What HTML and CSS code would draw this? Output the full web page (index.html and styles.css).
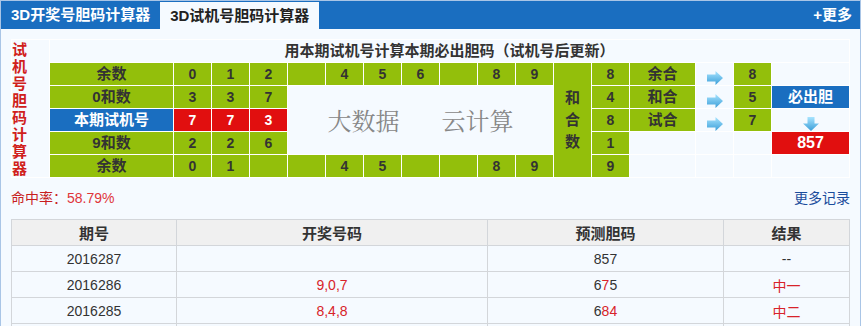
FILE: index.html
```html
<!DOCTYPE html>
<html lang="zh-CN">
<head>
<meta charset="utf-8">
<title>3D试机号胆码计算器</title>
<link rel="stylesheet" href="styles.css">
</head>
<body>
<div class="panel">
  <div class="tabbar">
    <div class="tabs">
      <span class="tab">3D开奖号胆码计算器</span>
      <span class="tab active">3D试机号胆码计算器</span>
    </div>
    <a class="more" href="#">+更多</a>
  </div>
  <div class="content">
    <table class="calc">
      <colgroup>
        <col class="c-side"><col class="c-lbl">
        <col class="c-num"><col class="c-num"><col class="c-num"><col class="c-num"><col class="c-num">
        <col class="c-num"><col class="c-num"><col class="c-num"><col class="c-num"><col class="c-num">
        <col class="c-num"><col class="c-num"><col class="c-he"><col class="c-num"><col class="c-num"><col class="c-last">
      </colgroup>
      <tr>
        <td rowspan="6" class="side">试<br>机<br>号<br>胆<br>码<br>计<br>算<br>器</td>
        <td colspan="17" class="title">用本期试机号计算本期必出胆码（试机号后更新）</td>
      </tr>
      <tr>
        <td class="g lbl">余数</td>
        <td class="g">0</td><td class="g">1</td><td class="g">2</td><td class="g"></td><td class="g">4</td>
        <td class="g">5</td><td class="g">6</td><td class="g"></td><td class="g">8</td><td class="g">9</td>
        <td rowspan="5" class="g lbl stack">和<br>合<br>数</td>
        <td class="g">8</td>
        <td class="g lbl">余合</td>
        <td class="arr"><svg class="ar" width="16" height="14" viewBox="0 0 16 14"><path d="M0 3.5H8.5V0L16 7L8.5 14V10.5H0Z" fill="url(#gr)"/><defs><linearGradient id="gr" x1="0" y1="0" x2="0" y2="1"><stop offset="0" stop-color="#a8e4ff"/><stop offset="1" stop-color="#3a9ed8"/></linearGradient></defs></svg></td>
        <td class="g">8</td>
        <td></td>
      </tr>
      <tr>
        <td class="g lbl">0和数</td>
        <td class="g">3</td><td class="g">3</td><td class="g">7</td>
        <td colspan="7" rowspan="3" class="cloud"><span>大数据</span><span>云计算</span></td>
        <td class="g">4</td>
        <td class="g lbl">和合</td>
        <td class="arr"><svg class="ar" width="16" height="14" viewBox="0 0 16 14"><path d="M0 3.5H8.5V0L16 7L8.5 14V10.5H0Z" fill="url(#gr)"/></svg></td>
        <td class="g">5</td>
        <td class="b lbl">必出胆</td>
      </tr>
      <tr>
        <td class="b lbl">本期试机号</td>
        <td class="r">7</td><td class="r">7</td><td class="r">3</td>
        <td class="g">8</td>
        <td class="g lbl">试合</td>
        <td class="arr"><svg class="ar" width="16" height="14" viewBox="0 0 16 14"><path d="M0 3.5H8.5V0L16 7L8.5 14V10.5H0Z" fill="url(#gr)"/></svg></td>
        <td class="g">7</td>
        <td class="arr"><svg class="ar" width="16" height="14" viewBox="0 0 16 14"><path d="M4.5 0H11.5V6.5H16L8 14L0 6.5H4.5Z" fill="url(#gr)"/></svg></td>
      </tr>
      <tr>
        <td class="g lbl">9和数</td>
        <td class="g">2</td><td class="g">2</td><td class="g">6</td>
        <td class="g">1</td>
        <td></td><td></td><td></td>
        <td class="r big">857</td>
      </tr>
      <tr>
        <td class="g lbl">余数</td>
        <td class="g">0</td><td class="g">1</td><td class="g"></td><td class="g"></td><td class="g">4</td>
        <td class="g">5</td><td class="g"></td><td class="g"></td><td class="g">8</td><td class="g">9</td>
        <td class="g">9</td>
        <td></td><td></td><td></td><td></td>
      </tr>
    </table>

    <div class="stats">
      <span class="rate">命中率：<em>58.79%</em></span>
      <a class="morelog" href="#">更多记录</a>
    </div>

    <table class="log">
      <colgroup>
        <col class="l1"><col class="l2"><col class="l3"><col class="l4">
      </colgroup>
      <tr><th>期号</th><th>开奖号码</th><th>预测胆码</th><th>结果</th></tr>
      <tr><td>2016287</td><td></td><td>857</td><td>--</td></tr>
      <tr><td>2016286</td><td class="hit">9,0,7</td><td>6<span class="hit">7</span>5</td><td class="hit">中一</td></tr>
      <tr><td>2016285</td><td class="hit">8,4,8</td><td>6<span class="hit">84</span></td><td class="hit">中二</td></tr>
      <tr><td></td><td></td><td></td><td></td></tr>
    </table>
  </div>
</div>
</body>
</html>
```

FILE: styles.css
```css
* { box-sizing: border-box; }
html, body { margin: 0; padding: 0; background: #fff; }
body {
  font-family: "Liberation Sans", Arial, "Noto Sans CJK SC", sans-serif;
  font-size: 14px;
  color: #333;
}
.panel {
  width: 861px;
  border: 1px solid #a9c5e6;
  background: #f5faff;
}
.tabbar {
  display: flex;
  justify-content: space-between;
  align-items: flex-end;
  height: 28px;
  background: #1a6ec0;
}
.tabs { display: flex; align-items: flex-end; }
.tab {
  padding: 0 10px;
  height: 28px;
  line-height: 28px;
  color: #fff;
  font-weight: bold;
  font-size: 15px;
  white-space: nowrap;
}
.tab.active {
  background: #f5faff;
  color: #222;
  height: 27px;
  line-height: 27px;
}
.more {
  align-self: center;
  color: #fff;
  font-weight: bold;
  font-size: 15px;
  line-height: 28px;
  padding-right: 8px;
  text-decoration: none;
}
.content { padding: 10px 10px 0; }

.calc {
  width: 839px;
  table-layout: fixed;
  border-collapse: separate;
  border-spacing: 1px;
  background: #fff;
}
.c-side { width: 37px; }
.c-lbl { width: 123px; }
.c-num { width: 37px; }
.c-he { width: 65px; }
.c-last { width: 77px; }
.calc td {
  height: 22px;
  padding: 0;
  text-align: center;
  vertical-align: middle;
  font-weight: bold;
  font-size: 14px;
  line-height: 22px;
  color: #333;
  background: #f5faff;
}
.calc td.lbl { font-size: 15px; }
.calc td.title { font-size: 15px; }
.calc td.g { background: #93bf0b; }
.calc td.b { background: #1a6ec0; color: #fff; }
.calc td.r { background: #e10f0f; color: #fff; }
.calc td.big { font-size: 16px; }
.calc td.side {
  color: #d0201b;
  font-size: 15px;
  line-height: 17px;
  text-align: left;
}
.calc td.stack { line-height: 22px; }
.calc td.arr { vertical-align: bottom; line-height: 0; }
.ar { display: block; margin: 0 auto; }
.calc td.cloud {
  font-family: "Noto Serif CJK SC", "Noto Sans CJK SC", serif;
  font-weight: normal;
  font-size: 24px;
  color: #878787;
}
.cloud span + span { margin-left: 42px; }

.stats {
  display: flex;
  justify-content: space-between;
  margin-top: 10px;
  height: 20px;
  line-height: 20px;
  font-size: 14px;
}
.rate { color: #c81e1e; }
.rate em { font-style: normal; color: #e0353a; }
.morelog { color: #1a4c9c; text-decoration: none; }

.log {
  margin-top: 11px;
  width: 839px;
  table-layout: fixed;
  border-collapse: collapse;
}
.l1 { width: 165px; }
.l2 { width: 311px; }
.l3 { width: 236px; }
.l4 { width: 126px; }
.log th, .log td {
  border: 1px solid #d3d6da;
  height: 26px;
  padding: 0;
  text-align: center;
  vertical-align: middle;
}
.log th {
  background: #f0f0f0;
  font-size: 15px;
  font-weight: bold;
  color: #333;
}
.log td { font-size: 14px; color: #333; }
.log .hit { color: #d8232a; }
```
